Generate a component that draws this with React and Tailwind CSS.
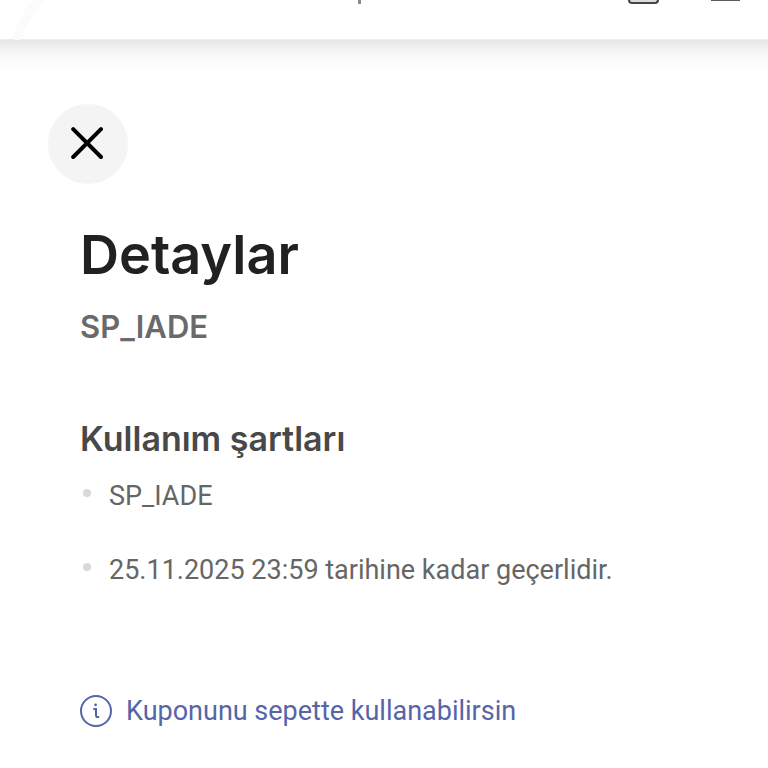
import React from "react";

const terms = ["SP_IADE", "25.11.2025 23:59 tarihine kadar geçerlidir."];

const CloseIcon = () => (
  <svg
    className="size-[34px]"
    viewBox="0 0 34 34"
    fill="none"
    stroke="currentColor"
    strokeWidth="4"
    strokeLinecap="round"
    aria-hidden="true"
  >
    <path d="M2.2 2.2 30 30M30 2.2 2.2 30" />
  </svg>
);

const InfoIcon = () => (
  <svg
    className="size-8 shrink-0"
    viewBox="0 0 32 32"
    fill="none"
    stroke="currentColor"
    strokeWidth="2"
    aria-hidden="true"
  >
    <circle cx="16" cy="16" r="15" />
    <path d="M13.3 14h2.7v6.2q0 1.9 1.9 1.9h1.3" />
    <circle cx="15.6" cy="9.8" r="1.4" fill="currentColor" stroke="none" />
  </svg>
);

// lower edge of the page toolbar, the rest is scrolled out of view
const Header = () => (
  <header className="relative h-10 border-b border-[#ececec] bg-white">
    <svg
      className="absolute left-0 top-0 h-10 w-12"
      viewBox="0 0 48 40"
      fill="none"
      aria-hidden="true"
    >
      <path d="M40 -2Q24 16 16 40" stroke="#fbfbfb" strokeWidth="9" />
    </svg>
    <div className="flex items-start justify-end pr-7">
      <span className="mr-[267px] h-1 w-[3px] bg-[#8a8a8a]" />
      <span className="mr-[52px] h-1 w-[31px] rounded-b-sm border-2 border-t-0 border-[#454545] bg-[#d9dedb]" />
      <span className="h-px w-[29px] bg-[#5c5c5c]" />
    </div>
  </header>
);

const App = () => {
  return (
    <div className="min-h-screen bg-white font-['Roboto','Noto_Sans',sans-serif]">
      <Header />
      {/* toolbar shadow, runs the full width */}
      <div className="h-8 bg-linear-to-b from-[#e6e6e6] via-[#f7f7f7] via-40% to-white" />
      <main className="px-12 pt-8">
        <button
          type="button"
          className="flex size-20 items-center justify-center rounded-full bg-[#f4f4f4] text-black"
          aria-label="Kapat"
        >
          <CloseIcon />
        </button>

        <div className="px-8 pt-9">
          <h1 className="font-['Inter',sans-serif] text-[54px] leading-[70px] font-semibold text-[#212121]">
            Detaylar
          </h1>
          <p className="pt-[17px] font-['Inter',sans-serif] text-[31px] leading-10 font-semibold text-[#6a6a6a]">
            SP_IADE
          </p>

          <h2 className="pt-[68px] font-['Inter',sans-serif] text-[34px] leading-[48px] font-semibold text-[#484848]">
            Kullanım şartları
          </h2>
          <ul className="flex flex-col gap-9 pt-3.5">
            {terms.map((term) => (
              <li
                key={term}
                className="flex items-start text-[27px] leading-[38px] text-[#666666]"
              >
                <span className="mt-3 mr-[18px] ml-[3px] size-2 shrink-0 rounded-full bg-[#d8d8d8]" />
                {term}
              </li>
            ))}
          </ul>

          <p className="flex items-center gap-3.5 pt-[102px] pb-9 text-[27px] leading-10 text-[#5565a8]">
            <InfoIcon />
            Kuponunu sepette kullanabilirsin
          </p>
        </div>
      </main>
    </div>
  );
};

export default App;
